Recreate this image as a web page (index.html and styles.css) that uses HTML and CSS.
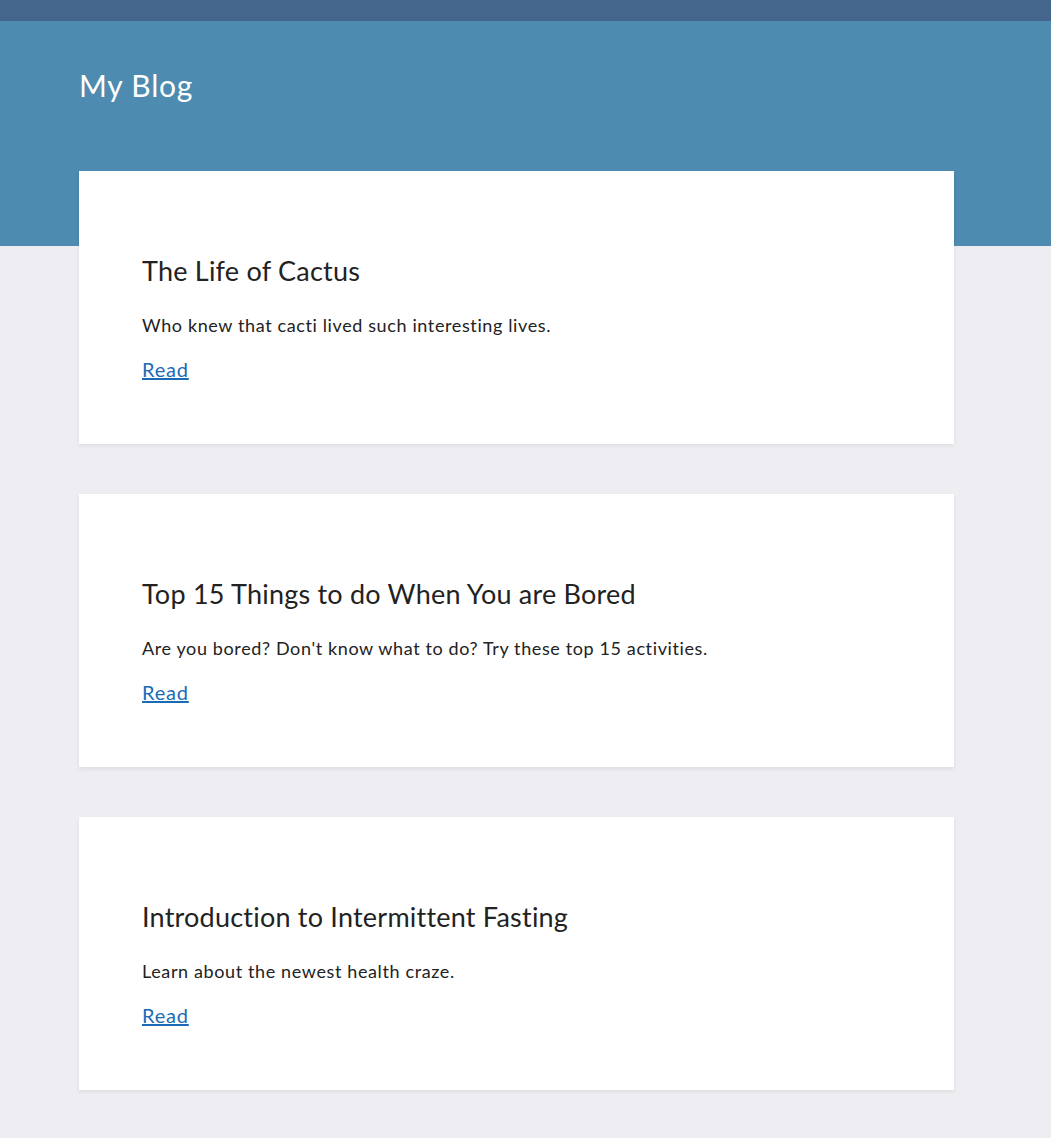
FILE: index.html
```html
<!DOCTYPE html>
<html lang="en">
<head>
<meta charset="utf-8">
<title>My Blog</title>
<link rel="stylesheet" href="styles.css">
</head>
<body>
<div class="topbar"></div>
<header class="header">
  <h1 class="site-title">My Blog</h1>
</header>
<main class="posts">
  <article class="card">
    <h2 class="card-title">The Life of Cactus</h2>
    <p class="card-text">Who knew that cacti lived such interesting lives.</p>
    <a class="card-link" href="#">Read</a>
  </article>
  <article class="card">
    <h2 class="card-title">Top 15 Things to do When You are Bored</h2>
    <p class="card-text">Are you bored? Don't know what to do? Try these top 15 activities.</p>
    <a class="card-link" href="#">Read</a>
  </article>
  <article class="card">
    <h2 class="card-title">Introduction to Intermittent Fasting</h2>
    <p class="card-text">Learn about the newest health craze.</p>
    <a class="card-link" href="#">Read</a>
  </article>
</main>
</body>
</html>
```
FILE: styles.css
```css
html, body {
  margin: 0;
  padding: 0;
}
body {
  background: #eeedf1;
  font-family: "Lato", "Open Sans", sans-serif;
  color: #222;
}
.topbar {
  height: 21px;
  background: #44668c;
}
.header {
  height: 225px;
  background: #4e8bb0;
  padding: 0 0 0 79px;
  box-sizing: border-box;
}
.site-title {
  margin: 0;
  padding-top: 46px;
  font-size: 30px;
  font-weight: 400;
  line-height: 36px;
  letter-spacing: 0.8px;
  color: #fff;
}
.posts {
  margin: -75px 0 0 79px;
  width: 875px;
  display: flex;
  flex-direction: column;
  gap: 50px;
  padding-bottom: 48px;
}
.card {
  background: #fff;
  box-shadow: 0 2px 4px rgba(0, 0, 0, 0.07);
  height: 273px;
  box-sizing: border-box;
  padding: 82px 63px 0;
}
.card-title {
  margin: 0;
  font-size: 27px;
  font-weight: 400;
  line-height: 36px;
  letter-spacing: 0.22px;
  color: #222;
}
.card-text {
  margin: 24px 0 0;
  font-size: 18px;
  line-height: 24px;
  letter-spacing: 0.62px;
  color: #222;
}
.card-link {
  display: inline-block;
  margin-top: 20px;
  font-size: 20px;
  line-height: 24px;
  letter-spacing: 0.8px;
  color: #1a6bb5;
}
```
